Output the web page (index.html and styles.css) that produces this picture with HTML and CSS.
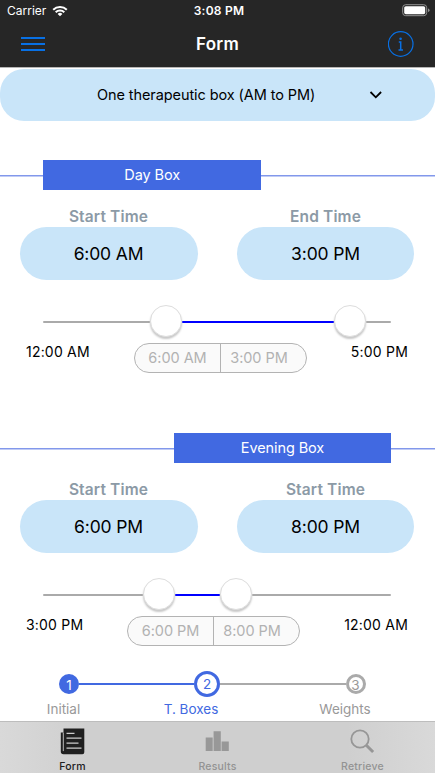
FILE: index.html
```html
<!DOCTYPE html>
<html lang="en">
<head>
<meta charset="utf-8">
<title>Form</title>
<link rel="stylesheet" href="styles.css">
</head>
<body>
<div class="app">
  <header class="header">
    <div class="status">
      <div class="carrier"><span>Carrier</span>
        <svg width="16" height="12" viewBox="0 0 16 12" fill="none" stroke="#fff" stroke-width="2"><path d="M1.2 4.7a9.7 9.7 0 0 1 13.6 0M3.7 7.2a6.1 6.1 0 0 1 8.6 0"/><path d="M5.6 8.900a3.500 3.500 0 0 1 4.800 0L8 11.200z" fill="#fff" stroke="none"/></svg>
      </div>
      <div class="clock">3:08 PM</div>
      <svg class="battery" width="28" height="13" viewBox="0 0 28 13"><rect x=".7" y=".7" width="24" height="11" rx="3" fill="none" stroke="#929292"/><rect x="2.2" y="2.2" width="21" height="8" rx="1.6" fill="#fff"/><path d="M26 4.5q1.5.3 1.5 1.8T26 8.1z" fill="#929292"/></svg>
    </div>
    <div class="nav">
      <svg class="menu" width="24" height="15" viewBox="0 0 24 15" stroke="#0870e4" stroke-width="2"><path d="M0 1.900h24M0 7.900h24M0 13.900h24"/></svg>
      <h1>Form</h1>
      <svg class="info" width="26" height="26" viewBox="0 0 26 26" fill="none" stroke="#0870e4"><circle cx="12.700" cy="13" r="12.300" stroke-width="1.200"/><circle cx="12.600" cy="7.700" r="1.300" fill="#0870e4" stroke="none"/><path d="M10.800 11.100h1.900v7.700M10.500 18.900h4.500" stroke-width="1.500"/></svg>
    </div>
  </header>
  <main>
    <div class="select"><span>One therapeutic box (AM to PM)</span>
      <svg width="14" height="8" viewBox="0 0 14 8" fill="none" stroke="#000" stroke-width="1.8"><path d="M1.5 1l5.3 5.3L12.1 1"/></svg>
    </div>
    <section class="box day">
      <div class="banner"><h2>Day Box</h2></div>
      <div class="fields">
        <div class="field"><label>Start Time</label><div class="pill">6:00 AM</div></div>
        <div class="field"><label>End Time</label><div class="pill">3:00 PM</div></div>
      </div>
      <div class="slider"><i class="track"></i><i class="thumb"></i><i class="track active"></i><i class="thumb"></i><i class="track"></i></div>
      <div class="range"><span>12:00 AM</span><div class="chip"><b>6:00 AM</b><b>3:00 PM</b></div><span class="end">5:00 PM</span></div>
    </section>
    <section class="box evening">
      <div class="banner"><h2>Evening Box</h2></div>
      <div class="fields">
        <div class="field"><label>Start Time</label><div class="pill">6:00 PM</div></div>
        <div class="field"><label>Start Time</label><div class="pill">8:00 PM</div></div>
      </div>
      <div class="slider"><i class="track"></i><i class="thumb"></i><i class="track active"></i><i class="thumb"></i><i class="track"></i></div>
      <div class="range"><span>3:00 PM</span><div class="chip"><b>6:00 PM</b><b>8:00 PM</b></div><span class="end">12:00 AM</span></div>
    </section>
    <div class="steps">
      <div class="rail"><span class="dot done">1</span><i class="link done"></i><span class="dot current">2</span><i class="link"></i><span class="dot">3</span></div>
      <div class="names"><span>Initial</span><span class="on">T. Boxes</span><span>Weights</span></div>
    </div>
  </main>
  <nav class="tabs">
    <div class="tab on">
      <svg width="26" height="28" viewBox="0 0 26 28"><path d="M3.500 .6H24.300v23.700q0 2-2 2H3.500q-2.700 0-2.700-2.700V4.600h2.700z" fill="#202020"/><path d="M3.300 4.600v18.500" stroke="#bbb"/><path d="M6.500 5.300h8M6.500 10.200h15M6.500 15.200h12M6.500 20.200h15" stroke="#ccc" stroke-width="1.200"/></svg>
      <span>Form</span></div>
    <div class="tab">
      <svg width="26" height="28" viewBox="0 0 26 28" fill="#989898"><path d="M.7 9.500h7V23h-7zM8.600 3.300h7.200V23H8.600zM16.600 13.500h7.200V23h-7.200z"/></svg>
      <span>Results</span></div>
    <div class="tab">
      <svg width="26" height="28" viewBox="0 0 26 28" fill="none" stroke="#969696"><circle cx="10" cy="11" r="8.700" stroke-width="1.800"/><path d="M16.300 17.300l6.800 6.700" stroke-width="3"/></svg>
      <span>Retrieve</span></div>
  </nav>
</div>
</body>
</html>
```
FILE: styles.css
```css
* { box-sizing: border-box; }
body { margin: 0; font-family: Inter, "Liberation Sans", sans-serif; background: #fff; color: #000; }
h1, h2 { margin: 0; }
svg { display: block; flex: none; }
.app { width: 435px; height: 773px; overflow: hidden; display: flex; flex-direction: column; }

.header { height: 68px; background: #262626; color: #fff; border-bottom: 1px solid #b5b5b5; }
.status { height: 21px; display: grid; grid-template-columns: 1fr auto 1fr; align-items: center; padding: 0 5px 0 7px; font-size: 12px; }
.carrier { display: flex; align-items: center; gap: 6px; }
.clock { font-weight: 600; letter-spacing: .25px; padding-left: 1px; }
.battery { justify-self: end; }
.nav { height: 45px; display: grid; grid-template-columns: 1fr auto 1fr; align-items: center; padding: 0 21px; }
h1 { font-size: 17px; font-weight: 600; letter-spacing: .25px; }
.info { justify-self: end; }

main { height: 653px; }
.select { height: 52px; margin-top: 1px; background: #c9e5f9; border-radius: 24px; display: flex; align-items: center; justify-content: space-between; padding: 0 52px 1px 97px; font-size: 14.500px; letter-spacing: -.09px; }

.box { height: 273px; }
.day { margin-top: 39px; }
.banner { height: 30px; display: flex; background: linear-gradient(#8298eb, #8298eb) 0 15px / 100% 1.500px no-repeat; }
.banner h2 { width: 217.500px; height: 30px; margin-left: 43.400px; background: #4169e1; color: #fff; text-align: center; font-size: 14.500px; font-weight: 400; line-height: 30px; letter-spacing: -.1px; }
.evening .banner h2 { width: 217px; margin-left: 174px; }
.fields { display: grid; grid-template-columns: 178px 177px; gap: 39.500px; padding: 17px 0 0 19.500px; }
label { display: block; height: 20px; line-height: 19px; text-align: center; font-size: 15.500px; font-weight: 600; letter-spacing: .15px; color: #8c9aa6; }
.pill { height: 52.500px; line-height: 53px; border-radius: 27px; background: #c9e5f9; text-align: center; font-size: 17.500px; letter-spacing: -.15px; }

.slider { height: 32px; margin: 25.500px 44px 0 43.400px; display: flex; align-items: center; }
.track { height: 2px; margin-top: 1px; background: #aaa; width: 106.600px; border-radius: 1px; }
.track.active { background: #00f; width: 152.500px; }
.track:last-child { flex: 1; width: auto; }
.evening .track { width: 99.600px; }
.evening .track.active { width: 45.500px; }
.thumb { width: 32px; height: 32px; border-radius: 50%; background: #fff; border: 1px solid #ddd; box-shadow: 0 2px 2px rgba(0,0,0,.22); }
.range { height: 30px; margin: 6px 27px 0 26px; display: flex; align-items: flex-start; font-size: 14px; line-height: 17px; letter-spacing: .2px; }
.range > span { width: 108px; white-space: nowrap; }
.evening .range > span:first-child { width: 101px; }
.range > .end { flex: 1; width: auto; text-align: right; }
.chip { width: 173px; height: 30px; border: 1px solid #b3b3b3; border-radius: 15px; background: #fafafa; display: flex; line-height: 28px; color: #b2b2b2; font-size: 14.500px; letter-spacing: -.05px; }
.chip b { width: 85px; font-weight: 400; text-align: center; }
.chip b + b { width: 86px; border-left: 1px solid #b3b3b3; padding-right: 9px; }

.steps { margin-top: -36px; color: #999; }
.rail { height: 27px; display: flex; align-items: center; padding: 0 69.500px 0 59px; }
.dot { width: 20px; height: 20px; flex: none; border: 3px solid #aaa; border-radius: 50%; text-align: center; line-height: 16px; font-size: 13.500px; }
.dot.done { background: #4169e1; border-color: #4169e1; color: #fff; }
.dot.current { width: 26px; height: 26px; color: #4169e1; border-color: #4169e1; line-height: 20px; }
.link { flex: 1; height: 2px; background: #aaa; }
.link.done { flex: 0 0 115px; background: #4169e1; }
.names { display: grid; grid-template-columns: 127px 128px 180px; line-height: 18px; margin-top: 3px; font-size: 13.500px; text-align: center; }
.names .on { color: #4169e1; }

.tabs { height: 52px; border-top: 1px solid #bdbdbd; background: linear-gradient(90deg, #d9d9d9, #cfcfcf 20%, #cfcfcf 80%, #d9d9d9); display: grid; grid-template-columns: repeat(3, 1fr); color: #939393; }
.tab { display: flex; flex-direction: column; align-items: center; padding-top: 6px; font-size: 10.500px; font-weight: 500; line-height: 13px; letter-spacing: .2px; gap: 4px; }
.tab.on { color: #202020; }
```
